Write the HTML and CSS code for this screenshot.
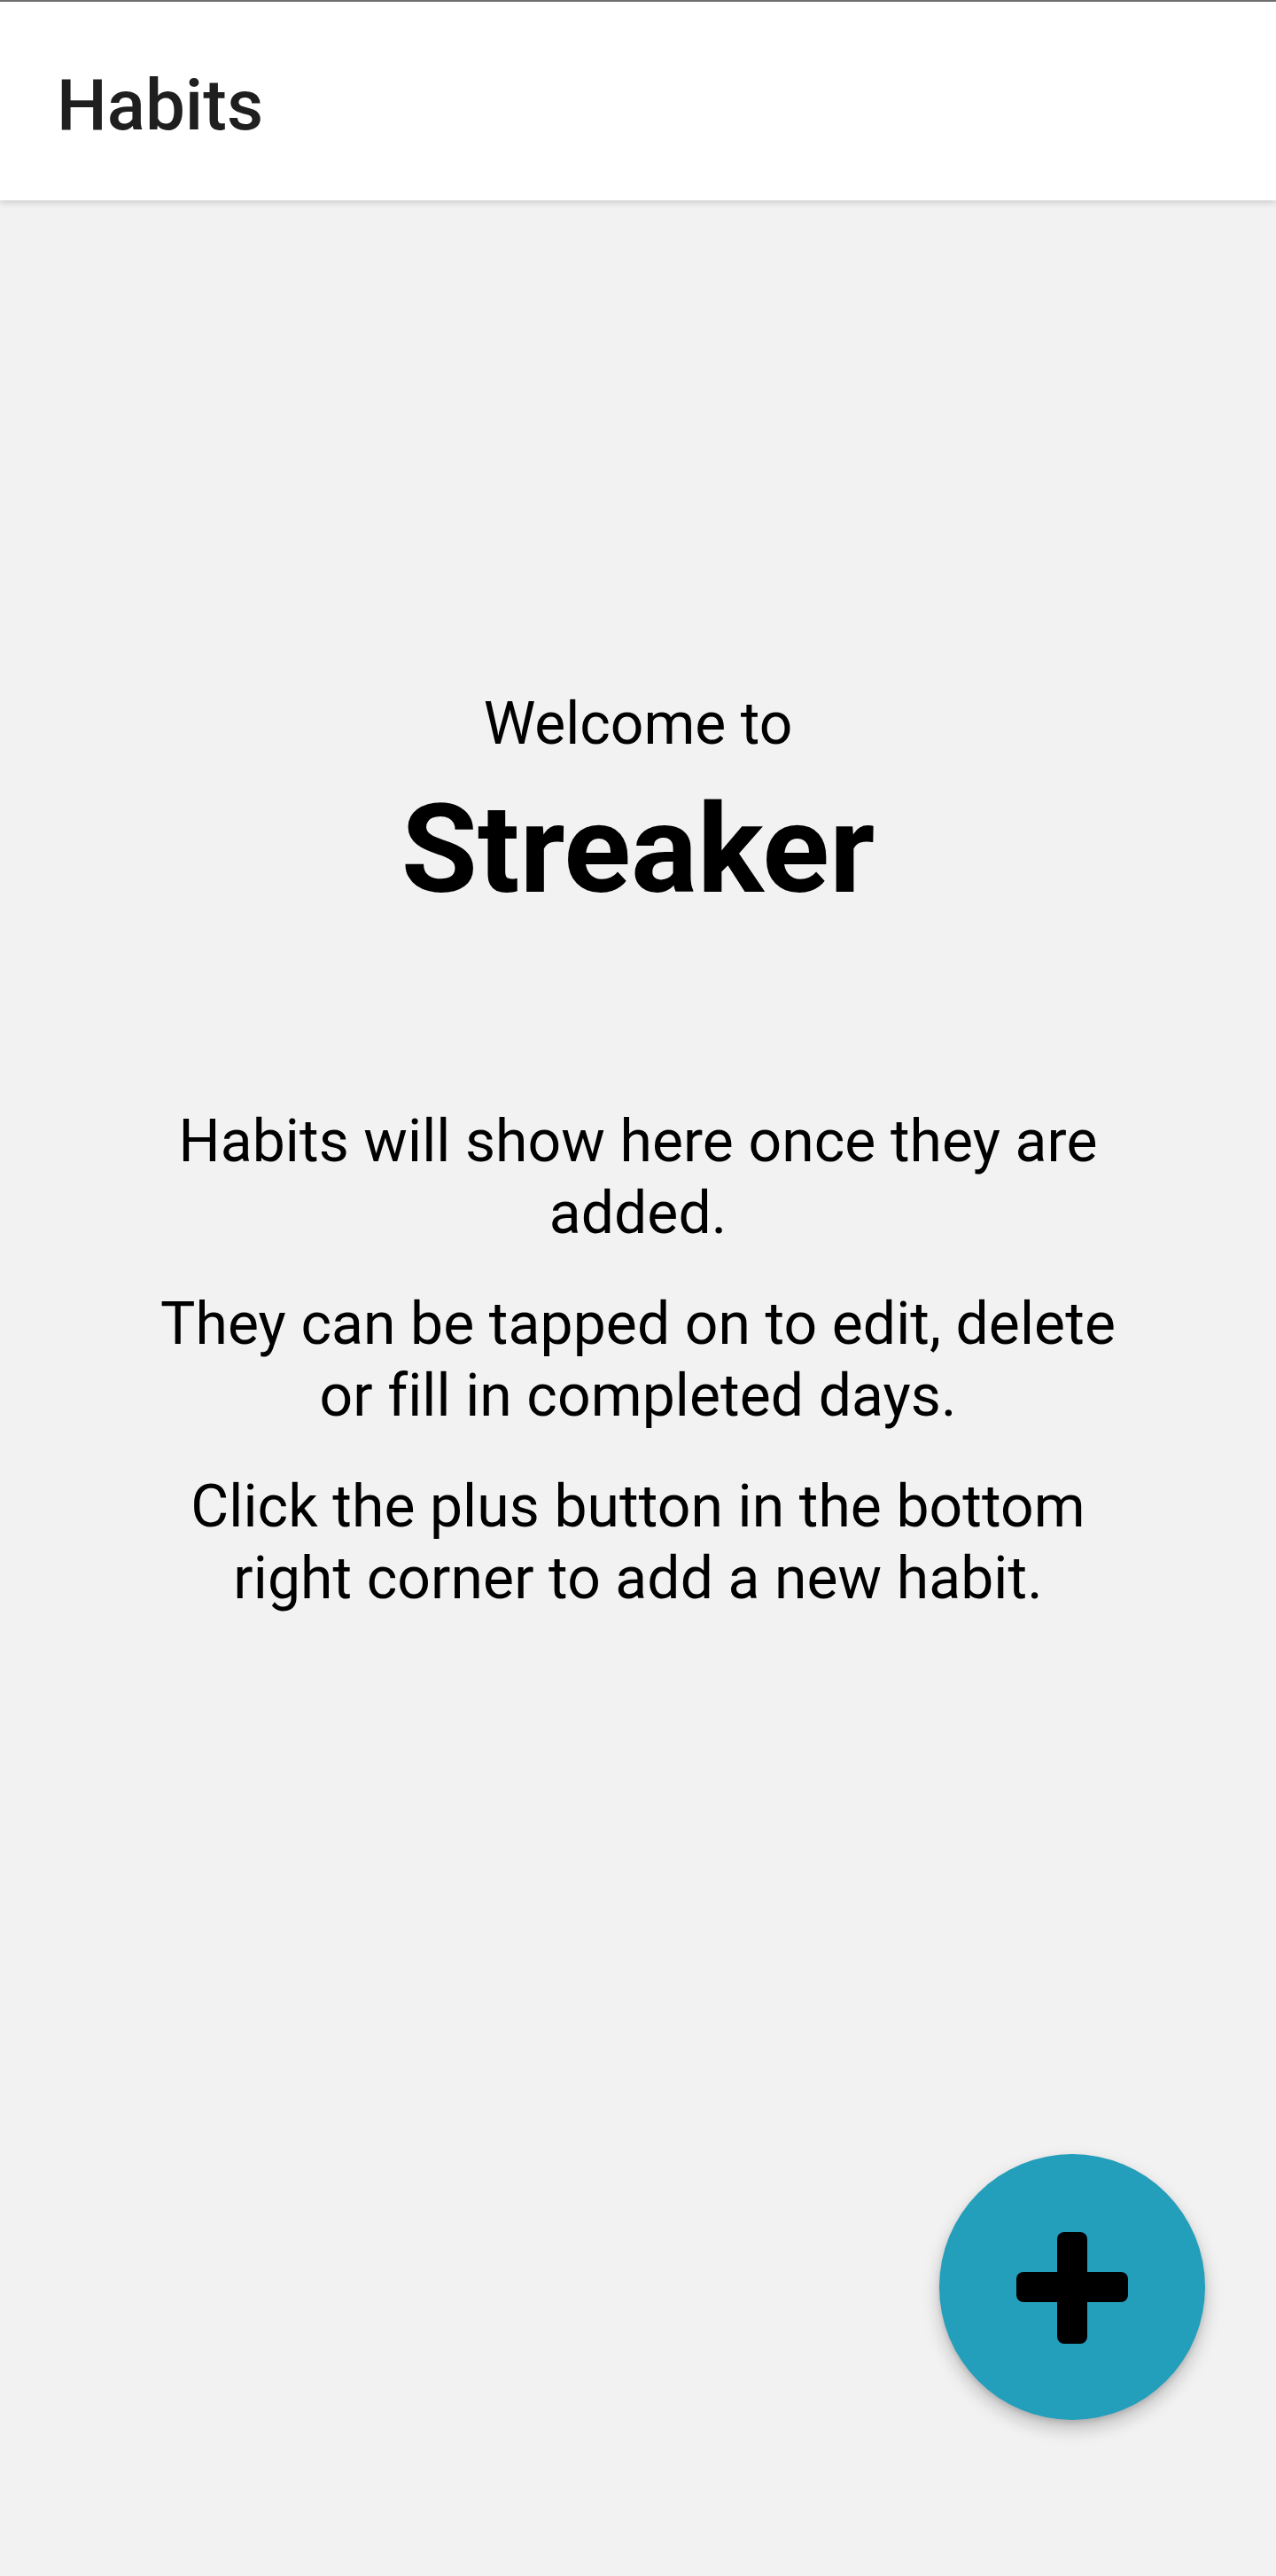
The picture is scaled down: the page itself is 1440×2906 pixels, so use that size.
FILE: index.html
```html
<!DOCTYPE html>
<html lang="en">
<head>
<meta charset="utf-8">
<title>Habits</title>
<link rel="stylesheet" href="styles.css">
</head>
<body>
<header class="app-bar">
  <h1 class="app-title">Habits</h1>
</header>
<main class="empty">
  <p class="welcome">Welcome to</p>
  <h2 class="brand">Streaker</h2>
  <div class="info">
    <p class="info-text">Habits will show here once they are added.</p>
    <p class="info-text">They can be tapped on to edit, delete or fill in completed days.</p>
    <p class="info-text">Click the plus button in the bottom right corner to add a new habit.</p>
  </div>
</main>
<button class="fab" aria-label="Add habit">
  <svg class="fab-icon" width="300" height="300" viewBox="0 0 300 300">
    <rect x="87" y="133" width="126" height="34" rx="8" fill="#000"/>
    <rect x="133" y="88" width="34" height="126" rx="8" fill="#000"/>
  </svg>
</button>
</body>
</html>
```
FILE: styles.css
```css
html, body {
  margin: 0;
  padding: 0;
}
body {
  background: #f2f2f2;
  font-family: Roboto, "Noto Sans", "Liberation Sans", sans-serif;
  color: #000;
  min-height: 2906px;
}
.app-bar {
  box-sizing: border-box;
  height: 226px;
  border-top: 2px solid #6e6e6e;
  background: #fff;
  box-shadow: 0 2px 8px rgba(0, 0, 0, 0.18);
  padding: 77px 0 0 64px;
  position: relative;
  z-index: 1;
}
.app-title {
  margin: 0;
  font-size: 80px;
  line-height: 80px;
  font-weight: 500;
  color: #1f1f1f;
}
.empty {
  padding: 558px 160px 0;
  text-align: center;
}
.welcome {
  margin: 0;
  font-size: 66px;
  line-height: 66px;
  font-weight: 400;
}
.brand {
  margin: 38px 0 0;
  font-size: 140px;
  line-height: 140px;
  font-weight: 700;
}
.info {
  margin-top: 219px;
  display: flex;
  flex-direction: column;
  gap: 44px;
}
.info-text {
  margin: 0;
  font-size: 66px;
  line-height: 81px;
  letter-spacing: 0.1px;
}
.fab {
  position: fixed;
  right: 80px;
  bottom: 176px;
  width: 300px;
  height: 300px;
  border: none;
  border-radius: 50%;
  padding: 0;
  background: #239ebb;
  box-shadow: 0 10px 20px rgba(0, 0, 0, 0.22), 0 3px 6px rgba(0, 0, 0, 0.12);
  display: flex;
  align-items: center;
  justify-content: center;
}
.fab-icon {
  display: block;
}
```
